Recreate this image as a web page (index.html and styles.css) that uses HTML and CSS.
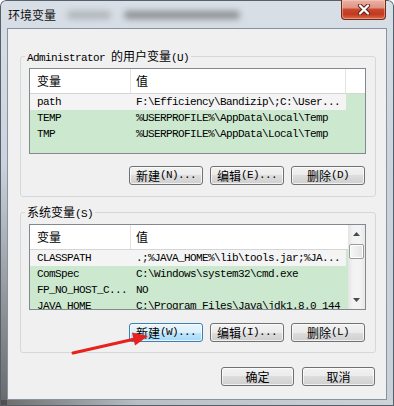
FILE: index.html
```html
<!DOCTYPE html>
<html lang="zh-CN">
<head>
<meta charset="utf-8">
<title>环境变量</title>
<link rel="stylesheet" href="styles.css">
</head>
<body>
<div class="window">
  <div class="titlebar">
    <span class="title zh">环境变量</span>
    <div class="glass glass-a"></div>
    <div class="glass glass-b"></div>
    <button class="close" aria-label="关闭">
      <svg width="14" height="11" viewBox="0 0 14 11">
        <path d="M3 1.5 L11 9.5 M11 1.5 L3 9.5" stroke="#5b1e14" stroke-width="4.2" stroke-linecap="round" fill="none"/>
        <path d="M3 1.5 L11 9.5 M11 1.5 L3 9.5" stroke="#ffffff" stroke-width="2.4" stroke-linecap="round" fill="none"/>
      </svg>
    </button>
  </div>
  <div class="client">
    <fieldset class="group g1">
      <legend>Administrator <span class="zh">的用户变量</span>(U)</legend>
      <div class="list l1">
        <div class="body">
          <div class="hdr"><div class="c1 zh">变量</div><div class="c2 zh">值</div><div class="c3"></div></div>
          <div class="row sel"><div class="c1">path</div><div class="c2">F:\Efficiency\Bandizip\;C:\User...</div></div>
          <div class="row"><div class="c1">TEMP</div><div class="c2">%USERPROFILE%\AppData\Local\Temp</div></div>
          <div class="row"><div class="c1">TMP</div><div class="c2">%USERPROFILE%\AppData\Local\Temp</div></div>
        </div>
      </div>
      <div class="btns">
        <button class="btn"><span class="zh">新建</span>(N)...</button>
        <button class="btn"><span class="zh">编辑</span>(E)...</button>
        <button class="btn"><span class="zh">删除</span>(D)</button>
      </div>
    </fieldset>
    <fieldset class="group g2">
      <legend><span class="zh">系统变量</span>(S)</legend>
      <div class="list l2">
        <div class="body">
          <div class="hdr"><div class="c1 zh">变量</div><div class="c2 zh">值</div></div>
          <div class="row sel"><div class="c1">CLASSPATH</div><div class="c2">.;%JAVA_HOME%\lib\tools.jar;%JA...</div></div>
          <div class="row"><div class="c1">ComSpec</div><div class="c2">C:\Windows\system32\cmd.exe</div></div>
          <div class="row"><div class="c1">FP_NO_HOST_C...</div><div class="c2">NO</div></div>
          <div class="row"><div class="c1">JAVA_HOME</div><div class="c2">C:\Program Files\Java\jdk1.8.0_144</div></div>
        </div>
        <div class="scroll">
          <div class="sb-btn"><svg width="7" height="4" viewBox="0 0 7 4"><path d="M0 4 L3.5 0 L7 4 Z" fill="#4a4a4a"/></svg></div>
          <div class="thumb"></div>
          <div class="sb-space"></div>
          <div class="sb-btn"><svg width="7" height="4" viewBox="0 0 7 4"><path d="M0 0 L7 0 L3.5 4 Z" fill="#4a4a4a"/></svg></div>
        </div>
      </div>
      <div class="btns b2">
        <button class="btn hot"><span class="zh">新建</span>(W)...</button>
        <button class="btn"><span class="zh">编辑</span>(I)...</button>
        <button class="btn"><span class="zh">删除</span>(L)</button>
      </div>
    </fieldset>
    <div class="dlg">
      <button class="btn wide"><span class="zh">确定</span></button>
      <button class="btn wide"><span class="zh">取消</span></button>
    </div>
  </div>
  <svg class="arrow" width="394" height="406" viewBox="0 0 394 406">
    <line x1="73" y1="353" x2="137" y2="338.5" stroke="#e8211c" stroke-width="3" stroke-linecap="round"/>
    <polygon points="148,336 132,332.5 135,345.5" fill="#e8211c"/>
  </svg>
</div>
</body>
</html>
```
FILE: styles.css
```css
* { box-sizing: border-box; }
html, body { margin: 0; padding: 0; }
body {
  width: 394px;
  height: 406px;
  overflow: hidden;
  background: #ffffff;
  font-family: "Liberation Mono", "Noto Sans CJK SC", monospace;
  font-size: 11px;
  letter-spacing: -0.6px;
  color: #000;
}
.zh {
  font-family: "Noto Sans CJK SC", "Noto Sans CJK JP", sans-serif;
  font-size: 12px;
  letter-spacing: 0;
}
.window {
  position: relative;
  width: 394px;
  height: 406px;
  display: flex;
  flex-direction: column;
  padding: 0 7px 6px 7px;
  border-radius: 6px 6px 0 0;
  background:
    linear-gradient(to bottom, rgba(70,70,70,0) 40%, rgba(70,70,70,0.75) 100%) left top / 7px 100% no-repeat,
    linear-gradient(to right, #6a6a6a 0%, #b9bfc5 35%, #cfd4d9 100%) left bottom / 100% 6px no-repeat,
    linear-gradient(to bottom, #d9dfe6 0%, #ccd3dc 40%, #c9d0d8 100%);
  box-shadow: inset 0 0 0 1px #55606c;
}
.titlebar {
  height: 28px;
  display: flex;
  align-items: flex-start;
  flex-shrink: 0;
}
.title {
  margin: 7px 0 0 1px;
  line-height: 16px;
  color: #111;
}
.glass {
  height: 8px;
  border-radius: 4px;
  filter: blur(3px);
  margin-top: 11px;
}
.glass-a { width: 44px; margin-left: 11px; background: rgba(100,105,110,0.35); }
.glass-b { width: 116px; margin-left: 13px; background: rgba(60,65,70,0.5); }
.close {
  margin-left: auto;
  margin-right: 1px;
  width: 45px;
  height: 20px;
  padding: 0;
  border: 1px solid #6f2a1e;
  border-top: none;
  border-radius: 0 0 4px 4px;
  background: linear-gradient(to bottom, #eab3a5 0%, #e09482 40%, #c8492e 50%, #c2391f 75%, #dc6a48 100%);
  box-shadow: inset 0 0 0 1px rgba(255,210,200,0.45);
  display: flex;
  align-items: center;
  justify-content: center;
}
.client {
  flex: 1;
  display: flex;
  flex-direction: column;
  background: #f0f0f0;
  border: 1px solid #8593a2;
}
.group {
  margin: 20px 10px 0 12px;
  padding: 5px 9px 11px 8px;
  border: 1px solid #d3d8dc;
  border-radius: 3px;
  min-width: 0;
}
.g2 { margin-top: 8px; padding-bottom: 10px; }
legend {
  padding: 0 2px;
  margin-left: -4px;
  line-height: 14px;
  height: 14px;
}
.list {
  border: 1px solid #828790;
  background: #cce8cf;
  overflow: hidden;
  display: flex;
}
.l1 { height: 86px; }
.l2 { height: 86px; }
.body {
  flex: 1;
  min-width: 0;
  overflow: hidden;
}
.hdr {
  display: flex;
  height: 25px;
  line-height: 24px;
  background: #ffffff;
  border-bottom: 1px solid #d5d5d5;
}
.hdr .c1 { border-right: 1px solid #e3e3e3; }
.l1 .hdr .c2 { border-right: 1px solid #e3e3e3; }
.c1, .c2 {
  white-space: nowrap;
  overflow: hidden;
  flex-shrink: 0;
}
.c1 { width: 101px; padding-left: 7px; }
.c2 { width: 215px; padding-left: 5px; }
.c3 { flex: 1; }
.row {
  display: flex;
  height: 16px;
  line-height: 16px;
}
.l2 .row { line-height: 17px; }
.row.sel .c1, .row.sel .c2 { background: #f3f4f3; }
.scroll {
  width: 17px;
  flex-shrink: 0;
  display: flex;
  flex-direction: column;
  background: linear-gradient(to right, #e4e4e4 0%, #f3f3f3 30%, #f3f3f3 70%, #e8e8e8 100%);
}
.sb-btn {
  height: 18px;
  display: flex;
  align-items: center;
  justify-content: center;
  flex-shrink: 0;
}
.thumb {
  height: 15px;
  margin: 1px 1px 0 1px;
  border: 1px solid #9b9b9b;
  border-radius: 2px;
  background: linear-gradient(to right, #f7f7f7, #e3e3e3);
  box-shadow: inset 0 0 0 1px #ffffff;
}
.sb-space { flex: 1; }
.btns {
  display: flex;
  justify-content: flex-end;
  gap: 7px;
  margin: 12px 1px 0 0;
}
.b2 { margin-top: 13px; }
.btn {
  width: 74px;
  height: 19px;
  padding: 0;
  font: inherit;
  letter-spacing: inherit;
  color: #000;
  border: 1px solid #707070;
  border-radius: 3px;
  background: linear-gradient(to bottom, #f2f2f2 0%, #ebebeb 50%, #dddddd 50%, #cfcfcf 100%);
  box-shadow: inset 0 0 0 1px rgba(255,255,255,0.7);
  display: flex;
  align-items: center;
  justify-content: center;
  line-height: 17px;
}
.btn.hot {
  border-color: #3c7fb1;
  background: linear-gradient(to bottom, #eaf6fd 0%, #d9f0fc 50%, #bee6fd 50%, #a7d9f5 100%);
}
.dlg {
  display: flex;
  justify-content: flex-end;
  gap: 8px;
  margin: 14px 11px 0 0;
}
.btn.wide { width: 73px; }
.arrow {
  position: absolute;
  left: 0;
  top: 0;
  pointer-events: none;
}
```
